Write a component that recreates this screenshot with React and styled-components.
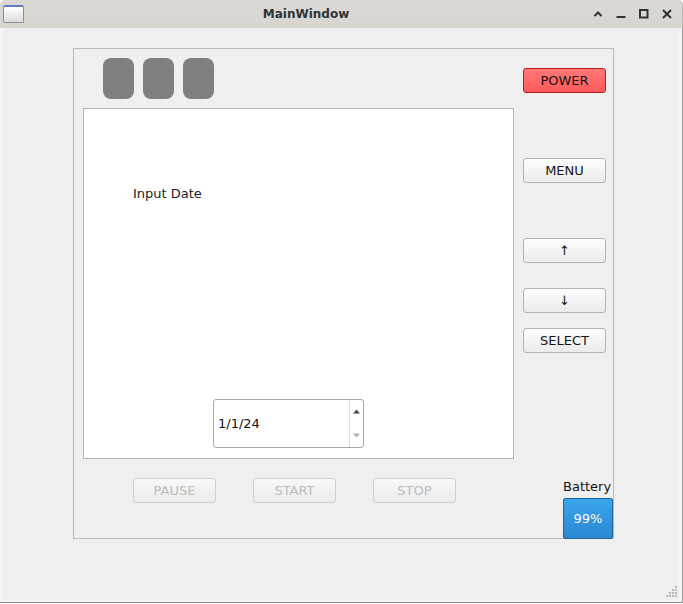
import React from "react";
import styled, { createGlobalStyle } from "styled-components";

const GlobalStyle = createGlobalStyle`
  html, body { margin: 0; padding: 0; background: #ffffff; }
  body { font-family: "DejaVu Sans", "Liberation Sans", sans-serif; }
  * { box-sizing: border-box; }
`;

const Window = styled.div`
  width: 683px;
  height: 604px;
  display: flex;
  flex-direction: column;
  background: #ffffff;
`;

const TitleBar = styled.div`
  height: 28px;
  flex: none;
  display: flex;
  align-items: center;
  background: linear-gradient(#dcd9d5, #d8d4d0);
  border-radius: 5px 5px 0 0;
  border-right: 1px solid #b8b4b0;
  color: #2e3436;
`;

const IconSlot = styled.div`
  width: 26px;
  height: 28px;
  display: flex;
  align-items: center;
  padding-left: 3px;
`;

const AppIcon = styled.div`
  width: 21px;
  height: 18px;
  border: 1px solid #8d8d8d;
  border-top: 2px solid #5b7fc2;
  border-radius: 2px;
  background: linear-gradient(#ffffff, #dcdcdc);
  margin-top: -1px;
`;

const Title = styled.div`
  flex: 1;
  text-align: center;
  font-weight: bold;
  font-size: 12px;
  color: #2e3436;
`;

const Controls = styled.div`
  display: flex;
  padding-right: 4px;
`;

const CtlBtn = styled.div`
  width: 23px;
  height: 28px;
  display: flex;
  align-items: center;
  justify-content: center;
`;

const Frame = styled.div`
  flex: 1;
  display: flex;
  background: #f5f4f3;
  padding: 0 3px 2px 3px;
  border-right: 1px solid #9b9b9b;
  border-bottom: 1px solid #858585;
  margin-bottom: 1px;
`;

const Content = styled.div`
  flex: 1;
  position: relative;
  background: #efefef;
  padding: 20px 0 0 70px;
`;

const Group = styled.div`
  width: 541px;
  height: 491px;
  border: 1px solid #bababa;
  display: flex;
  padding: 9px 0 0 9px;
`;

const LeftCol = styled.div`
  width: 431px;
  display: flex;
  flex-direction: column;
`;

const LedRow = styled.div`
  display: flex;
  gap: 9px;
  margin-left: 20px;
`;

const Led = styled.div`
  width: 31px;
  height: 41px;
  border-radius: 8px;
  background: #808080;
`;

const Display = styled.div`
  margin-top: 9px;
  width: 431px;
  height: 351px;
  background: #ffffff;
  border: 1px solid #b4b4b4;
  display: flex;
  flex-direction: column;
`;

const DateLabel = styled.div`
  margin: 77px 0 0 49px;
  font-size: 13px;
  line-height: 16px;
  color: #1c1c1c;
`;

const SpinBox = styled.div`
  margin: auto 0 10px 129px;
  width: 151px;
  height: 49px;
  display: flex;
  background: #ffffff;
  border: 1px solid #a9a9a9;
  border-radius: 3px;
`;

const SpinText = styled.div`
  flex: 1;
  display: flex;
  align-items: center;
  padding-left: 4px;
  font-size: 13px;
  line-height: 16px;
  color: #111;
`;

const SpinArrows = styled.div`
  width: 14px;
  border-left: 1px solid #dcdcdc;
  display: flex;
  flex-direction: column;
`;

const SpinHalf = styled.div`
  flex: 1;
  display: flex;
  align-items: center;
  justify-content: center;
`;

const ButtonRow = styled.div`
  display: flex;
  gap: 37px;
  margin: 19px 0 0 50px;
`;

const Btn = styled.div`
  width: 83px;
  height: 25px;
  flex: none;
  margin-top: ${(p) => p.$mt || 0}px;
  display: flex;
  align-items: center;
  justify-content: center;
  font-size: 13px;
  border-radius: 3px;
  color: ${(p) => (p.$disabled ? "#bcbcbc" : "#141414")};
  border: 1px solid
    ${(p) => (p.$danger ? "#b81c1c" : p.$disabled ? "#cfcfcf" : "#b3b3b3")};
  background: ${(p) =>
    p.$danger
      ? "linear-gradient(#ff7777, #ff5a5a)"
      : p.$disabled
      ? "linear-gradient(#f8f8f8, #ececec)"
      : "linear-gradient(#fdfdfd, #ebebeb)"};
`;

const RightCol = styled.div`
  flex: 1;
  margin-left: 9px;
  padding-top: 10px;
  display: flex;
  flex-direction: column;
`;

const Battery = styled.div`
  margin-top: auto;
  margin-bottom: -1px;
  align-self: flex-end;
  width: 50px;
  display: flex;
  flex-direction: column;
`;

const BatteryLabel = styled.div`
  font-size: 13px;
  line-height: 16px;
  margin-bottom: 3px;
  color: #141414;
  white-space: nowrap;
`;

const BatteryBox = styled.div`
  height: 41px;
  display: flex;
  align-items: center;
  justify-content: center;
  font-size: 13px;
  color: #ffffff;
  border: 1px solid #22649c;
  border-radius: 2px;
  background: linear-gradient(#3aa5ec, #2b88d1);
`;

const Grip = styled.svg`
  position: absolute;
  right: 2px;
  bottom: 3px;
`;

const gripDots = [];
for (let r = 0; r < 4; r++) {
  for (let c = 3 - r; c < 4; c++) {
    gripDots.push([c * 3, r * 3]);
  }
}

export default function App() {
  return (
    <>
      <GlobalStyle />
      <Window>
        <TitleBar>
          <IconSlot>
            <AppIcon />
          </IconSlot>
          <Title>MainWindow</Title>
          <Controls>
            <CtlBtn>
              <svg width="10" height="8" viewBox="0 0 10 8">
                <path d="M1.5 6 L5 2.5 L8.5 6" fill="none" stroke="#2e3436" strokeWidth="2" />
              </svg>
            </CtlBtn>
            <CtlBtn>
              <svg width="10" height="10" viewBox="0 0 10 10">
                <rect x="0.5" y="7" width="9" height="2" fill="#2e3436" />
              </svg>
            </CtlBtn>
            <CtlBtn>
              <svg width="10" height="10" viewBox="0 0 10 10">
                <rect x="1" y="1" width="7.5" height="7.5" fill="none" stroke="#2e3436" strokeWidth="2" />
              </svg>
            </CtlBtn>
            <CtlBtn>
              <svg width="10" height="10" viewBox="0 0 10 10">
                <path d="M1 1 L9 9 M9 1 L1 9" stroke="#2e3436" strokeWidth="2" />
              </svg>
            </CtlBtn>
          </Controls>
        </TitleBar>
        <Frame>
          <Content>
            <Group>
              <LeftCol>
                <LedRow>
                  <Led />
                  <Led />
                  <Led />
                </LedRow>
                <Display>
                  <DateLabel>Input Date</DateLabel>
                  <SpinBox>
                    <SpinText>1/1/24</SpinText>
                    <SpinArrows>
                      <SpinHalf>
                        <svg width="7" height="5" viewBox="0 0 7 5">
                          <path d="M0 4.5 L3.5 0.5 L7 4.5 Z" fill="#4a4a4a" />
                        </svg>
                      </SpinHalf>
                      <SpinHalf>
                        <svg width="7" height="5" viewBox="0 0 7 5">
                          <path d="M0 0.5 L3.5 4.5 L7 0.5 Z" fill="#b0b0b0" />
                        </svg>
                      </SpinHalf>
                    </SpinArrows>
                  </SpinBox>
                </Display>
                <ButtonRow>
                  <Btn $disabled>PAUSE</Btn>
                  <Btn $disabled>START</Btn>
                  <Btn $disabled>STOP</Btn>
                </ButtonRow>
              </LeftCol>
              <RightCol>
                <Btn $danger>POWER</Btn>
                <Btn $mt={65}>MENU</Btn>
                <Btn $mt={55}>↑</Btn>
                <Btn $mt={25}>↓</Btn>
                <Btn $mt={15}>SELECT</Btn>
                <Battery>
                  <BatteryLabel>Battery</BatteryLabel>
                  <BatteryBox>99%</BatteryBox>
                </Battery>
              </RightCol>
            </Group>
            <Grip width="11" height="11" viewBox="0 0 11 11">
              {gripDots.map(([x, y]) => (
                <rect key={`${x}-${y}`} x={x} y={y} width="2" height="2" fill="#b8b8b8" />
              ))}
            </Grip>
          </Content>
        </Frame>
      </Window>
    </>
  );
}
